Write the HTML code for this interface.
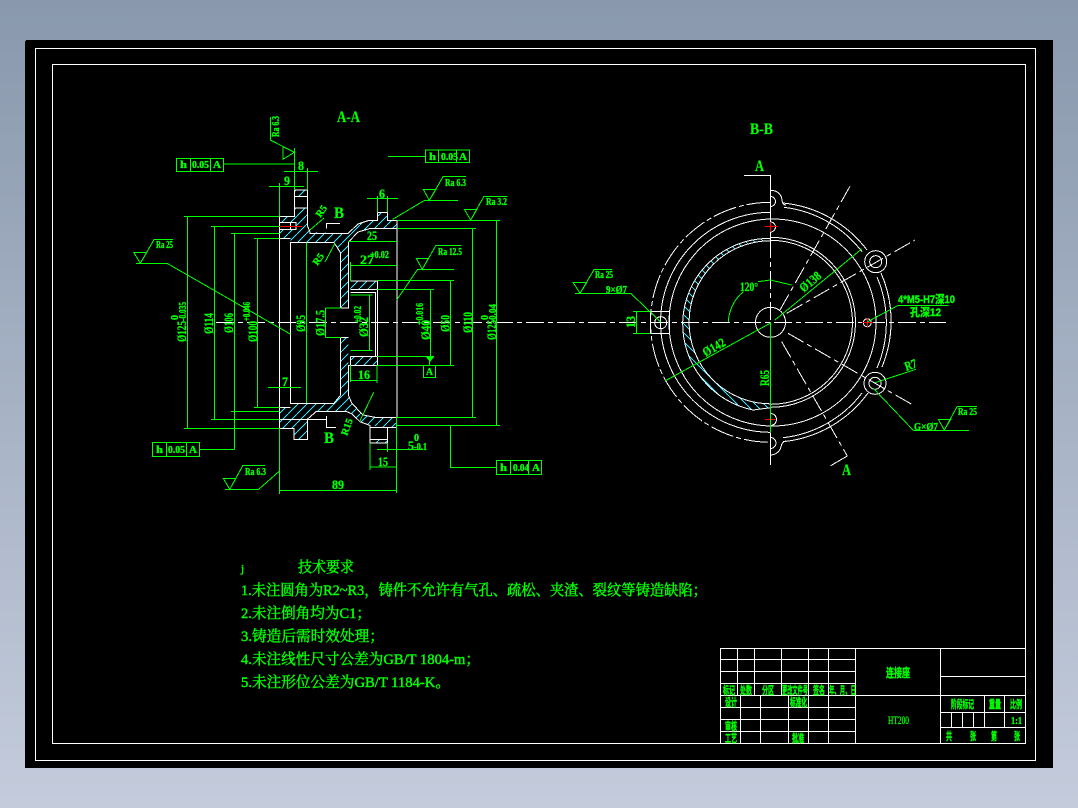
<!DOCTYPE html>
<html lang="zh">
<head>
<meta charset="utf-8">
<title>CAD drawing</title>
<style>
html,body{margin:0;padding:0;width:1078px;height:808px;overflow:hidden}
body{background:linear-gradient(180deg,#8998ad 0%,#c4ccdc 100%)}
svg{position:absolute;left:0;top:0;display:block}
.w{fill:none;stroke:#fff;stroke-width:1;shape-rendering:crispEdges}
.g{fill:none;stroke:#00ff00;stroke-width:1;shape-rendering:crispEdges}
.r{fill:none;stroke:#ff0000;stroke-width:1;shape-rendering:crispEdges}
.d{stroke-dasharray:18 4 5 4}
text{fill:#00ff00;font-family:"Liberation Serif","Noto Serif CJK SC",serif;stroke:#00ff00;stroke-width:.35px}
.t{font-size:15px;stroke-width:.45px}
.b{font-size:13px;font-weight:700;stroke-width:.3px}
.s{font-size:10px;font-weight:700;stroke-width:.35px}
.m{font-size:16px;font-weight:700;stroke-width:.2px}
.c{font-size:11px;font-weight:700;font-family:"Liberation Sans","Noto Sans CJK SC",sans-serif;stroke-width:.4px}
</style>
</head>
<body>
<svg width="1078" height="808" viewBox="0 0 1078 808" xmlns="http://www.w3.org/2000/svg">
<defs>
<pattern id="h1" patternUnits="userSpaceOnUse" width="9" height="9"><path d="M-1,10L10,-1" stroke="#30e6ff" stroke-width="1" fill="none" shape-rendering="crispEdges"/></pattern>
<pattern id="h2" patternUnits="userSpaceOnUse" width="9" height="9"><path d="M-1,-1L10,10" stroke="#30e6ff" stroke-width="1" fill="none" shape-rendering="crispEdges"/></pattern>
</defs>
<rect x="25" y="41" width="1028" height="727" fill="#000"/>
<rect x="26" y="40" width="1027" height="2" fill="#000"/>
<path class="w" d="M35.5,48.5H1035.5V760.5H35.5ZM52.5,64.5H1025.5V743.5H52.5Z"/>

<!-- hatched areas, section A-A -->
<g fill="url(#h1)">
<path d="M294.5,190H307.5V196.7H294.5Z"/>
<path d="M294.5,208H307.5V226L310,232L348,233.5L358,224L368,220.7H377.3V212.5H387.3V220.7H397V228.5H370L358,232L348.5,242V308H340.7V253L334,242.5H290.6V238.3H279.5V229.3H296V222.7H279.5V216.3H294.5Z"/>
<path d="M350.3,281H377.3V289.3H350.3Z"/>
<path d="M350.3,356.5H377.3V365.3H350.3Z"/>
<path d="M340.7,337.3H348.3V395L351.7,403L360,412L363,415L375,417.3H397V427.3H387.3L370,425.5L360,421.7L352,414L347,411.7H316L307.3,419.3V439.3H294V428.3H279.5V407.3H290.6V403.3H334L340.7,395Z"/>
<path d="M370,439.3H387.3V443H370Z"/>
</g>
<path fill="url(#h2)" d="M770.5,238.5A86,86 0 0 0 682.7,322A88,88 0 0 0 753,410L770.5,407.7V403.8A81.5,81.5 0 0 1 770.5,240.8Z"/>

<!-- centre line -->
<path class="w d" d="M216,322.5H946"/>

<!-- white outline section A-A -->
<path class="w" d="M294.5,190H307.5V226L310,232V233.5H348L358,224L368,220.7H377.3V212.5H387.3V220.7H397V417.3H375L363,415L360,412L351.7,403L348.3,395V365.3H377.3V356.5H350.3M294.5,190V216.3H279.5V428.3H294V439.3H307.3V419.3L316,411.7H347L352,414L360,421.7L370,425.5V443H387.3V427.3L370,427.3M294.5,196.7H307.5M294.5,208H307.5"/>
<path class="w" d="M397,228.5H370L358,232L348.5,242V308H340.7V253L334,242.5H290.6V403.3H334L340.7,395V337.3H348.3M279.5,238.3H290.6M279.5,222.7H296V229.3H279.5M290.6,222.7V229.3M279.5,407.3H290.6M370,439.3H387.3M387.3,427.3H397M350.3,281H377.3V356.5M350.3,289.3H377.3M350.3,292.5H375.5V356.5M340.7,308H348.3M348.3,281V289.3M274,419.3H327M326.7,416V427.3H336M326.5,228.7V223.5H340M350.3,365.3V356.5"/>
<path class="r" d="M274,226.5H302"/>

<!-- green dims section A-A -->
<path class="g" d="M270.3,117V140L294.3,152.3M283,146.7V159.3L294.3,152.3ZM294.5,148V190M223.5,164H294.5M284,171.3H318M307.5,168V190M269,186.3H304M279.5,183V216M184,216.5H279.5M211,226.5H279.5M231,233.5H279.5M254,238.3H279.5"/>
<path class="g" d="M187.5,216.5V428.3M214.3,226.5V419.3M234.3,233.5V449.3M257.3,238.3V407.3M306.5,242.5V403M184,428.3H279.5M211,419.3H279.5M231,411.3H279.5M254,407.3H279.5M199.3,449.3H234.3"/>
<path class="g" d="M325.7,308V337.3M325.7,308H341M325.7,337.3H341M350.3,295H372.7M369.5,295V350.5M350.3,350.5H372.7"/>
<path class="g" d="M350.3,262V281M350.3,265.3H397M348.3,241.7H397M367,198.3H398M377.5,196V212.5M387.5,196V212.5"/>
<path class="g" d="M397,220.5H500M397,228.7H476M496.7,220.5V425.3M397,425.3H500M472.7,228.7V417.3M397,417.3H476M377,280.3H454M450.7,280.3V365.3M377,365.3H454M377,289.3H434M430.7,289.3V356.5M377,356.5H434M429.7,356V365.3"/>
<path fill="#00ff00" d="M426,357H434L430,362Z"/>
<path class="g" d="M423.3,365.3H435.7V377.7H423.3Z"/>
<path class="g" d="M416.3,258.3H428.3L422.3,269.3ZM417.7,269.3H454M422.3,269.3L436,245.3H461.7M417.7,269.3L396.7,300"/>
<path class="g" d="M423.3,189.3H436L429.3,200.3ZM424,200.3H458M429.3,200.3L443.3,176.3H466M424,200.7L392.7,219.3"/>
<path class="g" d="M464.3,209.3H477L470.7,220ZM470.7,220L484,196.3H507.3"/>
<path class="g" d="M425.3,150H469.7V162.7H425.3ZM438.3,150V162.7M456.7,150V162.7M388,156.3H425.3"/>
<path class="g" d="M496.3,460.3H541.7V474.3H496.3ZM510.3,460.3V474.3M528.3,460.3V474.3M450.3,425.3V467.3H496.3"/>
<path class="g" d="M176.5,158.3H223.5V171.7H176.5ZM190.3,158.3V171.7M210.5,158.3V171.7"/>
<path class="g" d="M152.3,442.3H199.3V456.3H152.3ZM166.3,442.3V456.3M186.3,442.3V456.3"/>
<path class="g" d="M134,252.7H146.7L140.3,263.3ZM140.3,263.3L154,239.7H173M136,263.3H167L290.7,334.3"/>
<path class="g" d="M223.3,478.3H236L229.7,489.3ZM229.7,489.3L243,465.3H265M225,489.3H258.7L279.5,471"/>
<path class="g" d="M279.5,428V494M396.7,417V493M279.5,490.7H396.7M377,449.3H423M370,443V470M387.3,443V452M370,467H396.7M268,387.3H301M350.3,365V382M377,365V383M350.3,380.3H377"/>
<path class="g" d="M310,230L324,218M325,262L335,243.3M360,420.7L373.7,392.3"/>

<!-- texts section A-A -->
<text class="m" x="337" y="122" textLength="23" lengthAdjust="spacingAndGlyphs">A-A</text>
<text class="m" x="750" y="134" textLength="23" lengthAdjust="spacingAndGlyphs">B-B</text>
<text class="m" x="334" y="218" textLength="10" lengthAdjust="spacingAndGlyphs">B</text>
<text class="m" x="324" y="443" textLength="10" lengthAdjust="spacingAndGlyphs">B</text>
<text class="s" transform="translate(279,137) rotate(-90)" textLength="21" lengthAdjust="spacingAndGlyphs">Ra 6.3</text>
<text class="s" x="180" y="168" textLength="7" lengthAdjust="spacingAndGlyphs">h</text>
<text class="s" x="192" y="168" textLength="17" lengthAdjust="spacingAndGlyphs">0.05</text>
<text class="s" x="213" y="168" textLength="8" lengthAdjust="spacingAndGlyphs">A</text>
<text class="s" x="429" y="160" textLength="7" lengthAdjust="spacingAndGlyphs">h</text>
<text class="s" x="441" y="160" textLength="17" lengthAdjust="spacingAndGlyphs">0.05</text>
<text class="s" x="459" y="160" textLength="8" lengthAdjust="spacingAndGlyphs">A</text>
<text class="s" x="500" y="471" textLength="7" lengthAdjust="spacingAndGlyphs">h</text>
<text class="s" x="513" y="471" textLength="16" lengthAdjust="spacingAndGlyphs">0.04</text>
<text class="s" x="532" y="471" textLength="8" lengthAdjust="spacingAndGlyphs">A</text>
<text class="s" x="156" y="453" textLength="7" lengthAdjust="spacingAndGlyphs">h</text>
<text class="s" x="168" y="453" textLength="17" lengthAdjust="spacingAndGlyphs">0.05</text>
<text class="s" x="189" y="453" textLength="8" lengthAdjust="spacingAndGlyphs">A</text>
<text class="s" x="426" y="375" textLength="7" lengthAdjust="spacingAndGlyphs">A</text>
<text class="b" x="298" y="170" textLength="6" lengthAdjust="spacingAndGlyphs">8</text>
<text class="b" x="284" y="185" textLength="6" lengthAdjust="spacingAndGlyphs">9</text>
<text class="b" x="379" y="198" textLength="6" lengthAdjust="spacingAndGlyphs">6</text>
<text class="b" x="367" y="240" textLength="10" lengthAdjust="spacingAndGlyphs">25</text>
<text class="b" x="360" y="264" textLength="14" lengthAdjust="spacingAndGlyphs">27</text>
<text class="s" x="370" y="258" textLength="19" lengthAdjust="spacingAndGlyphs">+0.02</text>
<text class="s" x="445" y="186" textLength="21" lengthAdjust="spacingAndGlyphs">Ra 6.3</text>
<text class="s" x="486" y="205" textLength="21" lengthAdjust="spacingAndGlyphs">Ra 3.2</text>
<text class="s" x="438" y="255" textLength="24" lengthAdjust="spacingAndGlyphs">Ra 12.5</text>
<text class="s" x="156" y="248" textLength="17" lengthAdjust="spacingAndGlyphs">Ra 25</text>
<text class="s" x="245" y="475" textLength="21" lengthAdjust="spacingAndGlyphs">Ra 6.3</text>
<text class="b" transform="translate(186,342) rotate(-90)" textLength="21" lengthAdjust="spacingAndGlyphs">Ø125</text>
<text class="s" transform="translate(186,321) rotate(-90)" textLength="19" lengthAdjust="spacingAndGlyphs">-0.035</text>
<text class="s" transform="translate(178,320) rotate(-90)">0</text>
<text class="b" transform="translate(213,334) rotate(-90)" textLength="21" lengthAdjust="spacingAndGlyphs">Ø114</text>
<text class="b" transform="translate(233,333) rotate(-90)" textLength="20" lengthAdjust="spacingAndGlyphs">Ø106</text>
<text class="b" transform="translate(257,342) rotate(-90)" textLength="21" lengthAdjust="spacingAndGlyphs">Ø100</text>
<text class="s" transform="translate(250,321) rotate(-90)" textLength="19" lengthAdjust="spacingAndGlyphs">+0.046</text>
<text class="b" transform="translate(305,332) rotate(-90)" textLength="17" lengthAdjust="spacingAndGlyphs">Ø95</text>
<text class="b" transform="translate(324.5,336) rotate(-90)" textLength="26" lengthAdjust="spacingAndGlyphs">Ø17.5</text>
<text class="b" transform="translate(368,337) rotate(-90)" textLength="20" lengthAdjust="spacingAndGlyphs">Ø32</text>
<text class="s" transform="translate(361,323) rotate(-90)" textLength="17" lengthAdjust="spacingAndGlyphs">+0.02</text>
<text class="b" transform="translate(430,340) rotate(-90)" textLength="20" lengthAdjust="spacingAndGlyphs">Ø40</text>
<text class="s" transform="translate(423,325) rotate(-90)" textLength="22" lengthAdjust="spacingAndGlyphs">+0.016</text>
<text class="b" transform="translate(449.5,332) rotate(-90)" textLength="17" lengthAdjust="spacingAndGlyphs">Ø50</text>
<text class="b" transform="translate(472,333) rotate(-90)" textLength="21" lengthAdjust="spacingAndGlyphs">Ø110</text>
<text class="b" transform="translate(496,340) rotate(-90)" textLength="20" lengthAdjust="spacingAndGlyphs">Ø125</text>
<text class="s" transform="translate(496,323) rotate(-90)" textLength="19" lengthAdjust="spacingAndGlyphs">-0.04</text>
<text class="s" transform="translate(488,320) rotate(-90)">0</text>
<text class="b" x="408" y="450" textLength="6" lengthAdjust="spacingAndGlyphs">5</text>
<text class="s" x="414" y="441">0</text>
<text class="s" x="414" y="450" textLength="13" lengthAdjust="spacingAndGlyphs">-0.1</text>
<text class="b" x="378" y="466" textLength="10" lengthAdjust="spacingAndGlyphs">15</text>
<text class="b" x="332" y="489" textLength="12" lengthAdjust="spacingAndGlyphs">89</text>
<text class="b" x="282" y="386" textLength="6" lengthAdjust="spacingAndGlyphs">7</text>
<text class="b" x="358" y="379" textLength="12" lengthAdjust="spacingAndGlyphs">16</text>
<text class="s" text-anchor="middle" transform="translate(324,213) rotate(-55)">R5</text>
<text class="s" text-anchor="middle" transform="translate(321,261) rotate(-55)">R5</text>
<text class="s" text-anchor="middle" transform="translate(350,428) rotate(-70)">R15</text>

<!-- View B-B white -->
<path class="w" d="M744,175.3H770.3V240M770.3,433V465"/>
<path class="w d" d="M770.3,240V320"/>
<path class="w" d="M770.5,240.8A81.5,81.5 0 0 0 770.5,403.8M770.5,238.5A86,86 0 0 0 682.7,322A88,88 0 0 0 753,410L770.5,407.7"/>
<path class="w" d="M770.5,240.3A82,82 0 0 1 770.5,404.3M770.5,237.3A85,85 0 0 1 770.5,407.3"/>
<path class="w" d="M772.5,219A103.5,103.5 0 1 0 772.5,426A103.5,103.5 0 1 0 772.5,219Z"/>
<path class="w" d="M770.5,212.3A110,110 0 0 0 770.5,432.3"/>
<path class="w" d="M770.5,202.3A120,120 0 0 0 770.5,442.3" stroke-dasharray="24 3 5 3"/>
<path class="w" d="M783,203A120,120 0 0 1 867,250M881,273A120,120 0 0 1 882,367M868,393A120,120 0 0 1 783,441.7"/>
<path class="w" d="M784,207.3A115.5,115.5 0 0 1 862,251.7M877,277A115.5,115.5 0 0 1 877,368M862,393A115.5,115.5 0 0 1 783,437.7"/>
<path class="w" d="M770.5,190.7A10,10 0 0 1 782,200Q782.5,205 786,205M770.5,196.5A5,5 0 0 1 770.5,206.5M770.5,455A11,11 0 0 0 781,447Q781.5,442 786,441M770.5,437.5A5.5,5.5 0 0 1 770.5,448.5"/>
<circle class="w" cx="875.7" cy="261.7" r="11"/>
<circle class="w" cx="875.7" cy="261.7" r="6"/>
<circle class="w" cx="875" cy="383.3" r="11"/>
<circle class="w" cx="875" cy="383.3" r="6"/>
<path class="w" d="M650.7,311.7H669.3V333.3H650.7Z"/>
<circle class="w" cx="660.7" cy="322.7" r="6"/>
<circle class="w" cx="867.3" cy="322.7" r="4"/>
<circle class="w" cx="770.5" cy="322.3" r="15"/>
<path class="w" d="M770.5,222A5,5 0 0 1 770.5,232M770.5,413.5A6,6 0 0 1 770.5,425.5"/>
<path class="w d" d="M780,310L850.7,185M786.7,313.3L915,240M788,333.3L911.7,404.3M781.7,341.7L847.3,456"/>
<path class="w" d="M847.3,456L830.7,465.7"/>
<path class="r" d="M765,226.7H778M770.3,222V232M765,419.3H776M862,322.7H873M867.3,318V328"/>

<!-- View B-B green -->
<path class="g" d="M775,320L861.7,249M770,323.3L665,381M770.5,322V433"/>
<path class="g" d="M728.3,322A42,42 0 0 1 743.3,291.7M758,281.7L770.3,280L791.7,285"/>
<path class="g" d="M898.3,305.3H948.7M867,322L898.3,305.3"/>
<path class="g" d="M573.3,282.7H586.7L580,293.3ZM580,293.3L594,269.7H612M575,293.3H630.7L660.7,322"/>
<path class="g" d="M636.3,311.3V333.3M633,311.3H650.7M633,333.3H650.7"/>
<path class="g" d="M938.3,419.3H950.7L944.3,430ZM913.3,430.3H969M944.3,430L957.3,406.3H977M873.3,388.3L913.3,430.3M875,382.7L916,369.3"/>
<text class="m" x="755" y="171" textLength="9" lengthAdjust="spacingAndGlyphs">A</text>
<text class="m" x="842" y="475" textLength="9" lengthAdjust="spacingAndGlyphs">A</text>
<text class="s" x="595" y="278" textLength="18" lengthAdjust="spacingAndGlyphs">Ra 25</text>
<text class="s" x="606" y="293" textLength="21" lengthAdjust="spacingAndGlyphs">9×Ø7</text>
<text class="b" transform="translate(635,328) rotate(-90)" textLength="12" lengthAdjust="spacingAndGlyphs">13</text>
<text class="b" x="740" y="291" textLength="18" lengthAdjust="spacingAndGlyphs">120°</text>
<text class="b" text-anchor="middle" transform="translate(813,285) rotate(-40)" textLength="24" lengthAdjust="spacingAndGlyphs">Ø138</text>
<text class="b" text-anchor="middle" transform="translate(716,351) rotate(-30)" textLength="24" lengthAdjust="spacingAndGlyphs">Ø142</text>
<text class="b" transform="translate(769,386) rotate(-90)" textLength="16" lengthAdjust="spacingAndGlyphs">R65</text>
<text class="c" x="898" y="303" textLength="57" lengthAdjust="spacingAndGlyphs">4*M5-H7深10</text>
<text class="c" x="910" y="316" textLength="31" lengthAdjust="spacingAndGlyphs">孔深12</text>
<text class="b" text-anchor="middle" transform="translate(912,369) rotate(-20)" textLength="12" lengthAdjust="spacingAndGlyphs">R7</text>
<text class="s" x="914" y="430" textLength="24" lengthAdjust="spacingAndGlyphs">G×Ø7</text>
<text class="s" x="958" y="415" textLength="19" lengthAdjust="spacingAndGlyphs">Ra 25</text>

<!-- technical requirements -->
<text class="t" x="241" y="572" style="font-size:11px">j</text>
<text class="t" x="298" y="572" textLength="56" lengthAdjust="spacingAndGlyphs">技术要求</text>
<text class="t" x="241" y="595" textLength="466" lengthAdjust="spacingAndGlyphs">1.未注圆角为R2~R3，铸件不允许有气孔、疏松、夹渣、裂纹等铸造缺陷；</text>
<text class="t" x="241" y="618" textLength="130" lengthAdjust="spacingAndGlyphs">2.未注倒角均为C1；</text>
<text class="t" x="241" y="641" textLength="143" lengthAdjust="spacingAndGlyphs">3.铸造后需时效处理；</text>
<text class="t" x="241" y="664" textLength="239" lengthAdjust="spacingAndGlyphs">4.未注线性尺寸公差为GB/T 1804-m；</text>
<text class="t" x="241" y="687" textLength="209" lengthAdjust="spacingAndGlyphs">5.未注形位公差为GB/T 1184-K。</text>

<!-- title block -->
<path class="w" d="M720.5,648.5H1025.5V743.5H720.5ZM720.5,659.5H855.5M720.5,671.5H855.5M720.5,683.5H855.5M720.5,695.5H1025.5M720.5,707.5H855.5M720.5,719.5H855.5M720.5,731.5H855.5M737.5,648.5V695.5M754.5,648.5V695.5M781.5,648.5V695.5M808.5,648.5V743.5M828.5,648.5V743.5M855.5,648.5V743.5M740.5,695.5V743.5M760.5,695.5V743.5M788.5,695.5V743.5M940.5,648.5V743.5M940.5,676.5H1025.5M984.5,695.5V727.5M1004.5,695.5V727.5M940.5,712.5H1025.5M940.5,727.5H1025.5M951.5,712.5V727.5M962.5,712.5V727.5M973.5,712.5V727.5"/>
<g>
<text class="c" x="723" y="694" textLength="12" lengthAdjust="spacingAndGlyphs">标记</text>
<text class="c" x="740" y="694" textLength="12" lengthAdjust="spacingAndGlyphs">处数</text>
<text class="c" x="762" y="694" textLength="12" lengthAdjust="spacingAndGlyphs">分区</text>
<text class="c" x="782" y="694" textLength="26" lengthAdjust="spacingAndGlyphs">更改文件号</text>
<text class="c" x="813" y="694" textLength="12" lengthAdjust="spacingAndGlyphs">签名</text>
<text class="c" x="829" y="694" textLength="27" lengthAdjust="spacingAndGlyphs">年、月、日</text>
<text class="c" x="725" y="706" textLength="12" lengthAdjust="spacingAndGlyphs">设计</text>
<text class="c" x="790" y="706" textLength="17" lengthAdjust="spacingAndGlyphs">标准化</text>
<text class="c" x="725" y="730" textLength="12" lengthAdjust="spacingAndGlyphs">审核</text>
<text class="c" x="725" y="742" textLength="12" lengthAdjust="spacingAndGlyphs">工艺</text>
<text class="c" x="792" y="742" textLength="12" lengthAdjust="spacingAndGlyphs">批准</text>
<text class="c" x="886" y="677" textLength="24" lengthAdjust="spacingAndGlyphs" style="font-size:12px">连接座</text>
<text class="s" x="888" y="724" textLength="21" lengthAdjust="spacingAndGlyphs" style="font-size:12px;font-weight:400">HT200</text>
<text class="c" x="951" y="708" textLength="23" lengthAdjust="spacingAndGlyphs">阶段标记</text>
<text class="c" x="989" y="708" textLength="12" lengthAdjust="spacingAndGlyphs">重量</text>
<text class="c" x="1010" y="708" textLength="12" lengthAdjust="spacingAndGlyphs">比例</text>
<text class="s" x="1011" y="724" textLength="11" lengthAdjust="spacingAndGlyphs">1:1</text>
<text class="c" x="946" y="740" textLength="6" lengthAdjust="spacingAndGlyphs">共</text>
<text class="c" x="970" y="740" textLength="6" lengthAdjust="spacingAndGlyphs">张</text>
<text class="c" x="991" y="740" textLength="6" lengthAdjust="spacingAndGlyphs">第</text>
<text class="c" x="1014" y="740" textLength="6" lengthAdjust="spacingAndGlyphs">张</text>
</g>
</svg>
</body>
</html>
